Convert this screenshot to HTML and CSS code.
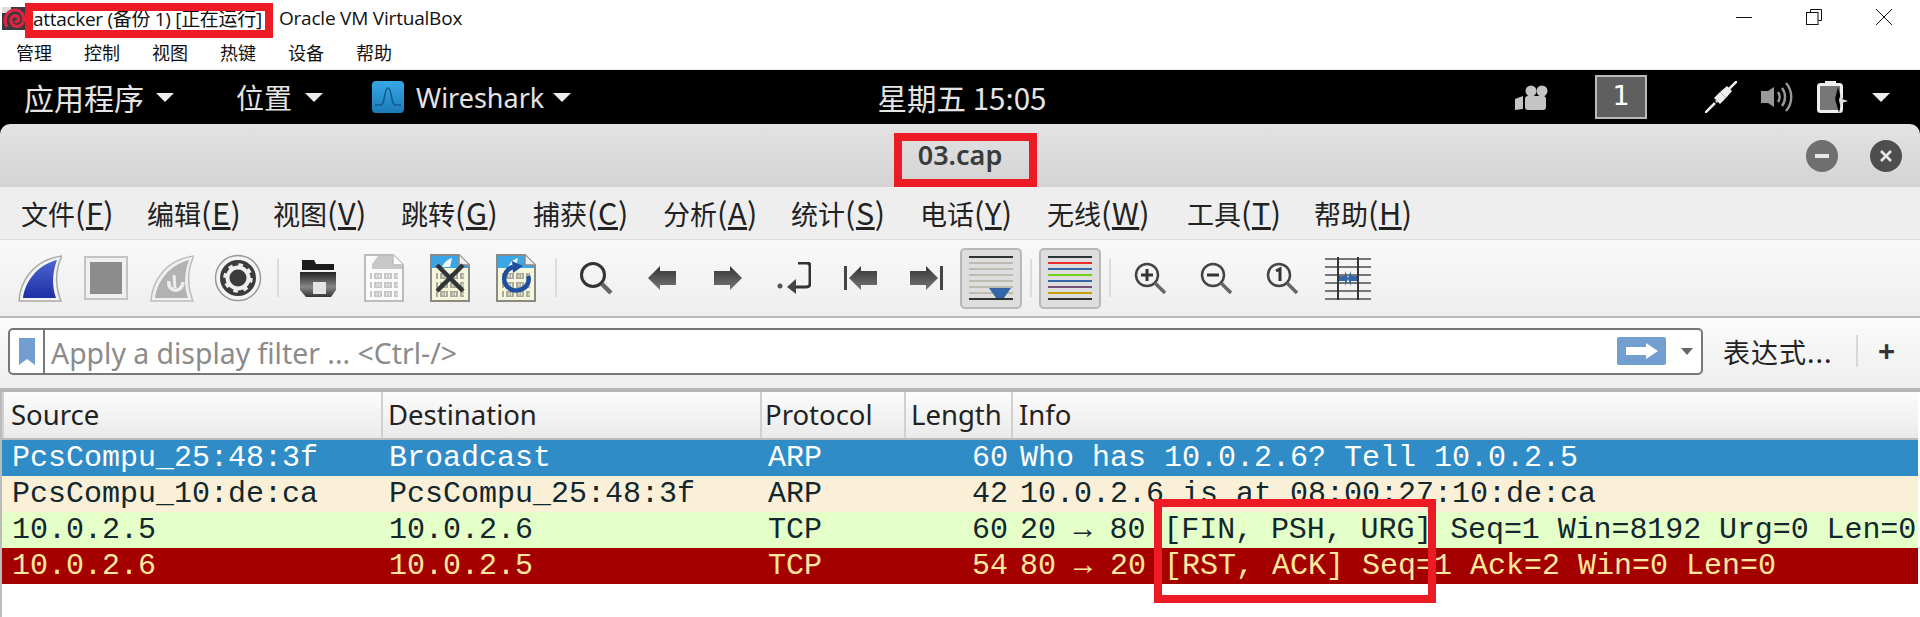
FILE: index.html
```html
<!DOCTYPE html>
<html lang="zh-CN">
<head>
  <meta charset="UTF-8">
  <title>attacker (备份 1) [正在运行] - Oracle VM VirtualBox</title>
  <link rel="stylesheet" href="styles.css">
</head>
<body>
  <svg class="defs" width="0" height="0">
    <defs>
      <linearGradient id="gBlue" x1="0" y1="0" x2="0" y2="1"><stop offset="0" stop-color="#4f66d0"/><stop offset="1" stop-color="#1c2ea6"/></linearGradient>
      <linearGradient id="gDark" x1="0" y1="0" x2="0" y2="1"><stop offset="0" stop-color="#222"/><stop offset=".6" stop-color="#888"/><stop offset="1" stop-color="#333"/></linearGradient>
      <linearGradient id="gArrow" x1="0" y1="0" x2="0" y2="1"><stop offset="0" stop-color="#333"/><stop offset="1" stop-color="#777"/></linearGradient>
      <linearGradient id="gWs" x1="0" y1="0" x2="0" y2="1"><stop offset="0" stop-color="#37a9e6"/><stop offset="1" stop-color="#1b7ab9"/></linearGradient>
      <pattern id="pDigits" width="10" height="9" patternUnits="userSpaceOnUse"><rect x="0" y="1" width="8" height="6" fill="#c6c6c6"/><rect x="2.5" y="2.5" width="1" height="3" fill="#f4f4f4"/><rect x="5" y="2.5" width="1" height="3" fill="#f4f4f4"/></pattern>
      <pattern id="pDigitsDark" width="10" height="9" patternUnits="userSpaceOnUse"><rect x="0" y="1" width="8" height="6" fill="#aaa99c"/><rect x="2.5" y="2.5" width="1" height="3" fill="#f6f6dc"/><rect x="5" y="2.5" width="1" height="3" fill="#f6f6dc"/></pattern>
    </defs>
  </svg>

  <header class="vbox-title">
    <svg class="vbox-icon" width="23" height="23" viewBox="0 0 23 23">
      <rect width="23" height="23" fill="#3a3a3e"/>
      <rect width="9" height="6" fill="#ddd"/>
      <path d="M5 20C0 11 6 3 13 3C20 3 23 10 21 15C19 21 10 21 9 14C8 10 13 7 16 10C18 13 15 16 13 14" fill="none" stroke="#dc2440" stroke-width="3.2"/>
    </svg>
    <span class="vbox-name">attacker (备份 1) [正在运行]</span>
    <span class="vbox-app">Oracle VM VirtualBox</span>
    <div class="vbox-controls">
      <svg width="16" height="16" viewBox="0 0 16 16"><path d="M0 8.5H16" stroke="#111" stroke-width="1"/></svg>
      <svg width="16" height="16" viewBox="0 0 16 16" fill="none" stroke="#111"><path d="M4.5 3V.5H15.5V11.5H12.5"/><rect x=".5" y="3.5" width="11.5" height="12"/></svg>
      <svg width="16" height="16" viewBox="0 0 16 16"><path d="M0 0L16 16M16 0L0 16" stroke="#111" stroke-width="1"/></svg>
    </div>
  </header>

  <nav class="vbox-menu">
    <span>管理</span><span>控制</span><span>视图</span><span>热键</span><span>设备</span><span>帮助</span>
  </nav>

  <div class="gnome-bar">
    <div class="gnome-left">
      <span class="apps">应用程序</span><i class="caret"></i>
      <span class="places">位置</span><i class="caret"></i>
      <svg class="ws-icon" width="32" height="32" viewBox="0 0 32 32">
        <rect width="32" height="32" rx="4" fill="url(#gWs)"/>
        <path d="M3 24H9C13 24 12 7 16 7C20 7 19 24 23 24H29" fill="none" stroke="#125a8c" stroke-width="1.6"/>
      </svg>
      <span class="ws-name">Wireshark</span><i class="caret"></i>
    </div>
    <div class="clock">星期五 15:05</div>
    <div class="gnome-right">
      <svg class="camera" width="33" height="25" viewBox="0 0 33 25" fill="#c4c4c4">
        <circle cx="16" cy="6" r="5.5"/><circle cx="27" cy="6" r="5.5"/>
        <rect x="10" y="11" width="21" height="14" rx="3"/>
        <path d="M0 14L8 11V24L0 25Z"/>
      </svg>
      <div class="workspace">1</div>
      <svg class="plug" width="32" height="32" viewBox="0 0 32 32">
        <path d="M0 32L12 20M20 12L32 0" stroke="#eee" stroke-width="2.5"/>
        <path d="M9 17L15 11L21 17L15 23Z" fill="#eee"/>
        <path d="M15 11L22 5L27 10L21 17Z" fill="#eee"/>
        <path d="M8 19L13 24" stroke="#000" stroke-width="1.5"/>
      </svg>
      <svg class="speaker" width="32" height="32" viewBox="0 0 32 32" fill="none" stroke="#999" stroke-width="2.4">
        <path d="M0 10H7L13 6V26L7 22H0Z" fill="#999" stroke="none"/>
        <path d="M17 11C19 14 19 18 17 21"/><path d="M21 7C25 12 25 20 21 25"/><path d="M25 2C32 10 32 22 25 30"/>
      </svg>
      <svg class="battery" width="31" height="32" viewBox="0 0 31 32">
        <rect x="8" y="0" width="11" height="4" fill="#eee"/>
        <rect x="1.5" y="3.5" width="23" height="27" rx="2" fill="#777" stroke="#eee" stroke-width="3"/>
        <path d="M21 6L24 17L31 20L24 22L22 32L18 18Z" fill="#000"/>
        <path d="M24 12L25 18L31 20L25 22L24 28L22 19Z" fill="#ddd"/>
      </svg>
      <i class="caret"></i>
    </div>
  </div>

  <main class="window">
    <div class="win-title">
      <span class="win-name">03.cap</span>
      <div class="win-buttons">
        <span class="win-btn min"><svg width="14" height="14" viewBox="0 0 14 14"><path d="M0 7H14" stroke="#e8e8e8" stroke-width="4"/></svg></span>
        <span class="win-btn close"><svg width="14" height="14" viewBox="0 0 14 14"><path d="M2 2L12 12M12 2L2 12" stroke="#e8e8e8" stroke-width="2.6"/></svg></span>
      </div>
    </div>

    <nav class="win-menu">
      <span>文件<em>(<u>F</u>)</em></span><span>编辑<em>(<u>E</u>)</em></span><span>视图<em>(<u>V</u>)</em></span><span>跳转<em>(<u>G</u>)</em></span><span>捕获<em>(<u>C</u>)</em></span><span>分析<em>(<u>A</u>)</em></span><span>统计<em>(<u>S</u>)</em></span><span>电话<em>(<u>Y</u>)</em></span><span>无线<em>(<u>W</u>)</em></span><span>工具<em>(<u>T</u>)</em></span><span>帮助<em>(<u>H</u>)</em></span>
    </nav>

    <div class="toolbar">
      <span class="tool"><svg width="44" height="47" viewBox="0 0 44 47">
        <path d="M1 46C2 28 14 5 44 1C37 14 37 32 43 46Z" fill="#f4f4f4" stroke="#a8a8a8" stroke-width="1.5"/>
        <path d="M5 43C7 27 19 10 39 5C34 18 34 32 38 43Z" fill="url(#gBlue)"/>
      </svg></span>
      <span class="tool"><svg width="44" height="44" viewBox="0 0 44 44">
        <rect x="1" y="1" width="42" height="42" fill="#f0f0f0" stroke="#c4c4c4" stroke-width="2"/>
        <rect x="6" y="6" width="32" height="32" fill="#8c8c8c"/>
      </svg></span>
      <span class="tool"><svg width="44" height="47" viewBox="0 0 44 47">
        <path d="M1 46C2 28 14 5 44 1C37 14 37 32 43 46Z" fill="#f0f0f0" stroke="#bdbdbd" stroke-width="1.5"/>
        <path d="M5 43C7 27 19 10 39 5C34 18 34 32 38 43Z" fill="#b2b2b2"/>
        <path d="M19 26C17 37 32 39 33 27" fill="none" stroke="#eee" stroke-width="3.5"/>
        <path d="M24 20L25 33" stroke="#eee" stroke-width="3"/>
      </svg></span>
      <span class="tool"><svg width="48" height="48" viewBox="0 0 48 48">
        <circle cx="24" cy="24" r="22.5" fill="#f4f4f4" stroke="#999" stroke-width="1.5"/>
        <circle cx="24" cy="24" r="18" fill="#3b3b3b"/>
        <circle cx="24" cy="24" r="10.5" fill="none" stroke="#eee" stroke-width="4"/>
        <circle cx="24" cy="24" r="13" fill="none" stroke="#eee" stroke-width="3.5" stroke-dasharray="4.5 5.7"/>
      </svg></span>
      <i class="tool-sep"></i>
      <span class="tool"><svg width="36" height="37" viewBox="0 0 36 37">
        <path d="M2 0H14L16 4H34V10H2Z" fill="#1c1c1c"/>
        <path d="M0 12H36V30L31 37H6L0 30Z" fill="url(#gDark)"/>
        <rect x="13" y="22" width="13" height="12" fill="#e4e4e4"/>
      </svg></span>
      <span class="tool"><svg width="40" height="48" viewBox="0 0 40 48">
        <path d="M1 1H29L39 11V47H1Z" fill="#fafafa" stroke="#bcbcbc" stroke-width="2"/>
        <path d="M2 2H14L8 10V15H38V12L28 2Z" fill="#c8c8c8"/>
        <path d="M29 1V11H39" fill="#fff" stroke="#bcbcbc" stroke-width="1.5"/>
        <rect x="6" y="18" width="28" height="26" fill="url(#pDigits)"/>
      </svg></span>
      <span class="tool"><svg width="40" height="48" viewBox="0 0 40 48">
        <path d="M1 1H29L39 11V47H1Z" fill="#f6f6dc" stroke="#8a8a84" stroke-width="2"/>
        <path d="M2 2H28L38 12V14H2Z" fill="#3aa6e6"/>
        <path d="M12 13C14 8 18 5 22 4L20 13Z" fill="#eef6fb"/>
        <path d="M29 1V11H39" fill="#eee" stroke="#8a8a84" stroke-width="1.5"/>
        <rect x="6" y="18" width="28" height="26" fill="url(#pDigitsDark)"/>
        <path d="M7 11L33 37M33 11L7 37" stroke="#2f3436" stroke-width="4.5"/>
      </svg></span>
      <span class="tool"><svg width="40" height="48" viewBox="0 0 40 48">
        <path d="M1 1H29L39 11V47H1Z" fill="#f6f6dc" stroke="#8a8a84" stroke-width="2"/>
        <path d="M2 2H28L38 12V14H2Z" fill="#3aa6e6"/>
        <path d="M12 13C14 8 18 5 22 4L20 13Z" fill="#eef6fb"/>
        <path d="M29 1V11H39" fill="#eee" stroke="#8a8a84" stroke-width="1.5"/>
        <rect x="6" y="18" width="28" height="26" fill="url(#pDigitsDark)"/>
        <path d="M17 13C9 15 6 25 10 31C15 39 28 38 32 29C33 26 33 24 32 22" fill="none" stroke="#1f4f9c" stroke-width="4.5"/>
        <path d="M16 7L27 12L17 19Z" fill="#1f4f9c"/>
      </svg></span>
      <i class="tool-sep"></i>
      <span class="tool"><svg width="34" height="34" viewBox="0 0 34 34" fill="none">
        <circle cx="14" cy="14" r="11.5" stroke="#333" stroke-width="3"/>
        <path d="M23 23L32 32" stroke="#666" stroke-width="4.5"/>
      </svg></span>
      <span class="tool"><svg width="28" height="24" viewBox="0 0 28 24"><path d="M0 12L12 0V5H28V19H12V24Z" fill="url(#gArrow)"/></svg></span>
      <span class="tool"><svg width="28" height="24" viewBox="0 0 28 24"><path d="M28 12L16 0V5H0V19H16V24Z" fill="url(#gArrow)"/></svg></span>
      <span class="tool"><svg width="34" height="32" viewBox="0 0 34 32" fill="none">
        <circle cx="3" cy="24" r="2.5" fill="#555"/>
        <path d="M21 1H30C32 1 33 2 33 4V21C33 24 32 25 29 25H18" stroke="#333" stroke-width="3"/>
        <path d="M10 25L19 17V32Z" fill="#444"/>
      </svg></span>
      <span class="tool"><svg width="33" height="24" viewBox="0 0 33 24">
        <rect width="3" height="24" fill="#444"/><path d="M5 12L17 0V5H33V19H17V24Z" fill="url(#gArrow)"/>
      </svg></span>
      <span class="tool"><svg width="33" height="24" viewBox="0 0 33 24">
        <rect x="30" width="3" height="24" fill="#444"/><path d="M28 12L16 0V5H0V19H16V24Z" fill="url(#gArrow)"/>
      </svg></span>
      <span class="tool-toggle"><svg width="44" height="44" viewBox="0 0 44 44">
        <rect y="0" width="44" height="2" fill="#2e3436"/>
        <g fill="#bcbdb0"><rect y="6" width="44" height="2"/><rect y="12" width="44" height="2"/><rect y="18" width="44" height="2"/><rect y="24" width="44" height="2"/><rect y="30" width="44" height="2"/><rect y="36" width="44" height="2"/></g>
        <rect y="42" width="44" height="2" fill="#2e3436"/>
        <path d="M20 32H42L35 42H27Z" fill="#3465a4"/>
      </svg></span>
      <i class="tool-sep narrow"></i>
      <span class="tool-toggle"><svg width="44" height="44" viewBox="0 0 44 44">
        <rect y="0" width="44" height="2" fill="#2e3436"/><rect y="6" width="44" height="2" fill="#ef2929"/>
        <rect y="12" width="44" height="2" fill="#3465a4"/><rect y="18" width="44" height="2" fill="#73d216"/>
        <rect y="24" width="44" height="2" fill="#3465a4"/><rect y="30" width="44" height="2" fill="#75507b"/>
        <rect y="36" width="44" height="2" fill="#c4a000"/><rect y="42" width="44" height="2" fill="#2e3436"/>
      </svg></span>
      <i class="tool-sep narrow"></i>
      <span class="tool"><svg width="33" height="32" viewBox="0 0 33 32" fill="none">
        <circle cx="13" cy="13" r="11" stroke="#444" stroke-width="2.5"/><path d="M7 13H19M13 7V19" stroke="#333" stroke-width="3"/>
        <path d="M21 21L31 31" stroke="#666" stroke-width="3.5"/>
      </svg></span>
      <span class="tool"><svg width="33" height="32" viewBox="0 0 33 32" fill="none">
        <circle cx="13" cy="13" r="11" stroke="#444" stroke-width="2.5"/><path d="M7 13H19" stroke="#333" stroke-width="3"/>
        <path d="M21 21L31 31" stroke="#666" stroke-width="3.5"/>
      </svg></span>
      <span class="tool"><svg width="33" height="32" viewBox="0 0 33 32" fill="none">
        <circle cx="13" cy="13" r="11" stroke="#444" stroke-width="2.5"/><path d="M10 9L14 7V19" stroke="#333" stroke-width="3"/>
        <path d="M21 21L31 31" stroke="#666" stroke-width="3.5"/>
      </svg></span>
      <span class="tool"><svg width="46" height="43" viewBox="0 0 46 43">
        <g fill="#777"><rect y="1" width="46" height="2"/><rect y="9" width="46" height="2"/><rect y="17" width="46" height="2"/><rect y="25" width="46" height="2"/><rect y="33" width="46" height="2"/><rect y="41" width="46" height="2"/></g>
        <rect x="12" width="2" height="43" fill="#333"/><rect x="32" width="2" height="43" fill="#333"/>
        <path d="M14 19H20V14L23 21L26 14V19H32V24H26V29L23 22L20 29V24H14Z" fill="#3465a4"/>
      </svg></span>
    </div>

    <div class="filter-bar">
      <div class="filter-input">
        <span class="bookmark"><svg width="16" height="27" viewBox="0 0 16 27"><path d="M0 0H16V27L8 21L0 27Z" fill="#729fcf"/></svg></span>
        <span class="placeholder">Apply a display filter ... &lt;Ctrl-/&gt;</span>
        <span class="apply"><svg width="32" height="16" viewBox="0 0 32 16"><path d="M0 4H20V0L32 8L20 16V12H0Z" fill="#fff"/></svg></span>
        <i class="combo-arrow"></i>
      </div>
      <span class="expr">表达式...</span>
      <i class="filter-sep"></i>
      <span class="plus">+</span>
    </div>

    <section class="packets">
      <div class="head">
        <span>Source</span><span>Destination</span><span>Protocol</span><span>Length</span><span>Info</span>
      </div>
      <div class="row selected">
        <span>PcsCompu_25:48:3f</span><span>Broadcast</span><span>ARP</span><span class="num">60</span><span>Who has 10.0.2.6? Tell 10.0.2.5</span>
      </div>
      <div class="row arp">
        <span>PcsCompu_10:de:ca</span><span>PcsCompu_25:48:3f</span><span>ARP</span><span class="num">42</span><span>10.0.2.6 is at 08:00:27:10:de:ca</span>
      </div>
      <div class="row tcp">
        <span>10.0.2.5</span><span>10.0.2.6</span><span>TCP</span><span class="num">60</span><span class="long">20 → 80 [FIN, PSH, URG] Seq=1 Win=8192 Urg=0 Len=0</span>
      </div>
      <div class="row rst">
        <span>10.0.2.6</span><span>10.0.2.5</span><span>TCP</span><span class="num">54</span><span>80 → 20 [RST, ACK] Seq=1 Ack=2 Win=0 Len=0</span>
      </div>
    </section>
  </main>

  <!-- red boxes drawn over the screenshot -->
  <div class="mark mark-title"></div>
  <div class="mark mark-file"></div>
  <div class="mark mark-flags"></div>
</body>
</html>
```

FILE: styles.css
```css
* {
  padding: 0;
  margin: 0;
  box-sizing: border-box;
}
html, body {
  width: 1920px;
  height: 617px;
  overflow: hidden;
  background: #fff;
}
body {
  position: relative;
  font-family: "Noto Sans", "Noto Sans CJK SC", sans-serif;
}
.defs {
  position: absolute;
}
svg {
  display: block;
  flex: none;
}

/* virtualbox frame */
.vbox-title {
  height: 35px;
  display: flex;
  align-items: center;
  padding-left: 2px;
  font-size: 19px;
  color: #111;
  font-family: "Open Sans", "Noto Sans CJK SC", sans-serif;
}
.vbox-icon {
  margin-top: 1px;
}
.vbox-name {
  margin-left: 8px;
  letter-spacing: -0.3px;
}
.vbox-app {
  margin-left: 17px;
  letter-spacing: -0.2px;
}
.vbox-controls {
  margin-left: auto;
  display: flex;
  gap: 54px;
  padding-right: 28px;
  align-self: flex-start;
  padding-top: 9px;
}
.vbox-menu {
  height: 35px;
  display: flex;
  gap: 32px;
  padding-left: 16px;
  align-items: center;
  font-family: "Noto Sans CJK SC", sans-serif;
  font-size: 18px;
  color: #111;
  border-bottom: 1px solid #eee;
}

/* gnome top bar */
.gnome-bar {
  height: 54px;
  background: #000;
  color: #e4e4e4;
  display: grid;
  grid-template-columns: 1fr auto 1fr;
  align-items: center;
  font-family: "Noto Sans CJK SC", sans-serif;
}
.gnome-left, .gnome-right {
  display: flex;
  align-items: center;
}
.caret {
  width: 0;
  height: 0;
  border-left: 9.5px solid transparent;
  border-right: 9.5px solid transparent;
  border-top: 9px solid #eee;
  flex: none;
}
.apps {
  font-size: 30px;
  margin-left: 24px;
  margin-right: 12px;
}
.places {
  font-size: 28px;
  margin-left: 62px;
  margin-right: 13px;
}
.ws-icon {
  margin-left: 49px;
}
.ws-name {
  font-family: "Noto Sans", sans-serif;
  font-size: 27px;
  margin-left: 12px;
  margin-right: 9px;
}
.clock {
  font-size: 29.5px;
  margin-left: 4px;
}
.gnome-right {
  justify-content: flex-end;
  padding-right: 30px;
  gap: 24px;
}
.workspace {
  width: 52px;
  height: 44px;
  margin: 0 34px 0 23px;
  background: #5f5f5f;
  border: 2px solid #bbb;
  color: #fff;
  font-size: 27px;
  font-family: "DejaVu Sans", sans-serif;
  text-align: center;
  line-height: 38px;
}

/* wireshark window */
.window {
  background: #000;
}
.win-title {
  height: 63px;
  background: linear-gradient(#e3e3e3, #d3d3d3);
  border-radius: 10px 10px 0 0;
  display: flex;
  align-items: center;
  justify-content: center;
  position: relative;
}
.win-name {
  font-size: 27px;
  font-weight: 600;
  color: #3a3a3a;
  padding-bottom: 2px;
}
.win-buttons {
  position: absolute;
  right: 18px;
  top: 16px;
  display: flex;
  gap: 32px;
}
.win-btn {
  width: 32px;
  height: 32px;
  border-radius: 50%;
  display: flex;
  align-items: center;
  justify-content: center;
}
.win-btn.min {
  background: #6f6f6f;
}
.win-btn.close {
  background: #4e4e4e;
}
.win-menu {
  height: 52px;
  padding: 0 0 2px 21px;
  background: #eee;
  display: grid;
  grid-template-columns: 126px 126px 128px 132px 130px 128px 129px 127px 140px 127px auto;
  align-items: center;
  font-family: "Noto Sans CJK SC", sans-serif;
  font-size: 27px;
  color: #222;
  white-space: nowrap;
}
.win-menu em {
  font-style: normal;
  font-size: 30.5px;
  letter-spacing: 0.6px;
}
.toolbar {
  height: 79px;
  border-top: 1px solid #dcdcdc;
  border-bottom: 2px solid #b9b9b9;
  background: linear-gradient(#f9f9f9, #eee);
  display: flex;
  align-items: center;
  padding-left: 7px;
}
.tool {
  width: 66px;
  height: 50px;
  flex: none;
  display: flex;
  align-items: center;
  justify-content: center;
}
.tool-toggle {
  width: 62px;
  height: 61px;
  margin: 0 1px;
  flex: none;
  background: #dedede;
  border: 2px solid #b8b8b8;
  border-radius: 5px;
  display: flex;
  align-items: center;
  justify-content: center;
}
.tool-sep {
  width: 14px;
  height: 38px;
  flex: none;
  display: flex;
  justify-content: center;
}
.tool-sep::after {
  content: "";
  width: 2px;
  background: #dcdcdc;
}
.tool-sep.narrow {
  width: 15px;
}
.filter-bar {
  height: 70px;
  background: linear-gradient(#fbfbfb, #eee);
  display: flex;
  align-items: center;
  padding: 0 0 4px 8px;
}
.filter-input {
  width: 1695px;
  height: 47px;
  background: #fff;
  border: 2px solid #777;
  border-radius: 5px;
  display: flex;
  align-items: center;
  flex: none;
}
.bookmark {
  width: 35px;
  height: 100%;
  border-right: 2px solid #777;
  display: flex;
  align-items: center;
  justify-content: center;
  flex: none;
}
.placeholder {
  margin-left: 6px;
  padding-top: 3px;
  font-size: 28.4px;
  color: #8b8b8b;
  white-space: nowrap;
}
.apply {
  width: 49px;
  height: 28px;
  margin-left: auto;
  background: #729fcf;
  border-radius: 2px;
  display: flex;
  align-items: center;
  justify-content: center;
}
.combo-arrow {
  width: 0;
  height: 0;
  margin: 0 8px 0 15px;
  border-left: 6px solid transparent;
  border-right: 6px solid transparent;
  border-top: 7px solid #666;
}
.expr {
  margin-left: 20px;
  width: 133px;
  font-family: "Noto Sans CJK SC", sans-serif;
  font-size: 27px;
  color: #222;
  white-space: nowrap;
  letter-spacing: 1px;
}
.filter-sep {
  width: 2px;
  height: 32px;
  background: #d8d8d8;
}
.plus {
  margin-left: 20px;
  font-size: 30px;
  font-weight: 700;
  color: #333;
  line-height: 1;
}

/* packet list */
.packets {
  height: 229px;
  background: #fff;
  border-top: 4px solid #b5b5b5;
  border-left: 2px solid #bbb;
  padding-right: 2px;
}
.head, .row {
  display: grid;
  grid-template-columns: 381px 379px 144px 107px 1fr;
  white-space: pre;
  overflow: hidden;
}
.head {
  height: 48px;
  align-items: stretch;
  background: linear-gradient(#fcfcfc, #eaeaea);
  border-bottom: 2px solid #bbb;
  font-size: 27.5px;
  color: #222;
}
.head span {
  padding-left: 5px;
  border-right: 2px solid #d0d0d0;
  line-height: 46px;
}
.head span:first-child {
  padding-left: 7px;
  border-left: 2px solid #d0d0d0;
}
.head span:nth-child(3) {
  padding-left: 3px;
}
.head span:last-child {
  padding-left: 6px;
  border-right: 0;
}
.row {
  height: 36px;
  font-family: "Liberation Mono", monospace;
  font-size: 30px;
  line-height: 36px;
}
.row span {
  padding-left: 6px;
}
.row span:first-child {
  padding-left: 10px;
}
.row span:last-child {
  padding-left: 7px;
}
.row .num {
  padding: 0 5px 0 0;
  text-align: right;
}
.row .long {
  letter-spacing: -0.08px;
}
.selected {
  background: #308cc6;
  color: #fff;
}
.arp {
  background: #faf0d7;
  color: #12272e;
}
.tcp {
  background: #e4ffc7;
  color: #12272e;
}
.rst {
  background: #a40000;
  color: #fbe8a0;
}

/* annotations */
.mark {
  position: absolute;
  border: 8px solid #ed1c24;
}
.mark-title {
  left: 25px;
  top: 3px;
  width: 248px;
  height: 35px;
}
.mark-file {
  left: 894px;
  top: 133px;
  width: 143px;
  height: 54px;
}
.mark-flags {
  left: 1154px;
  top: 499px;
  width: 282px;
  height: 104px;
}
```
